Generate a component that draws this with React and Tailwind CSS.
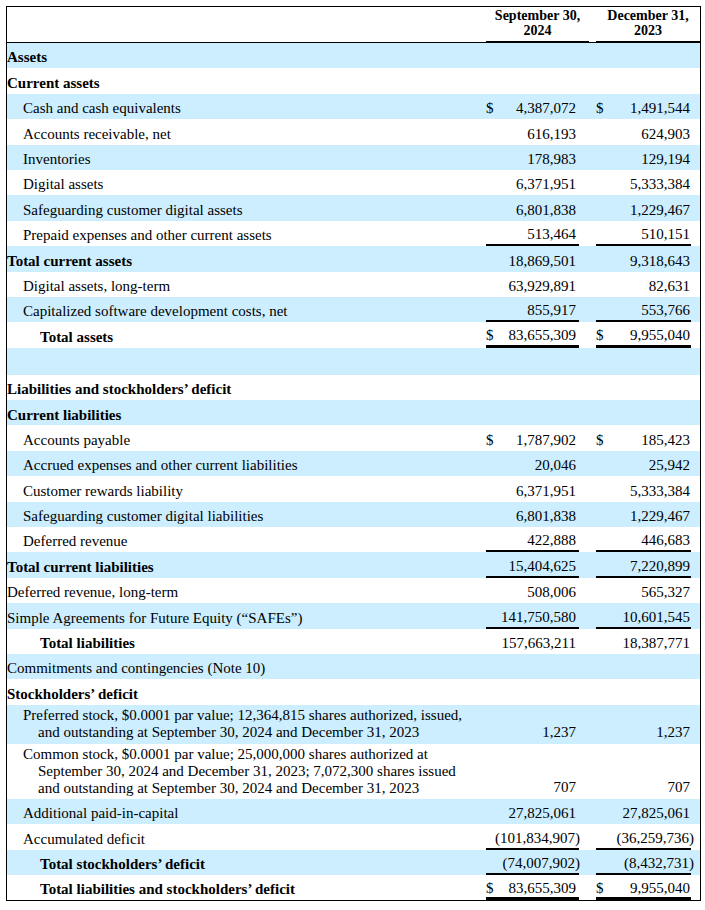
import React from 'react';

const rows = [
  { label: 'Assets', bold: true },
  { label: 'Current assets', bold: true },
  { label: 'Cash and cash equivalents', lvl: 1, a: '4,387,072', b: '1,491,544', dollar: true },
  { label: 'Accounts receivable, net', lvl: 1, a: '616,193', b: '624,903' },
  { label: 'Inventories', lvl: 1, a: '178,983', b: '129,194' },
  { label: 'Digital assets', lvl: 1, a: '6,371,951', b: '5,333,384' },
  { label: 'Safeguarding customer digital assets', lvl: 1, a: '6,801,838', b: '1,229,467' },
  { label: 'Prepaid expenses and other current assets', lvl: 1, a: '513,464', b: '510,151', ul: 'single' },
  { label: 'Total current assets', bold: true, a: '18,869,501', b: '9,318,643' },
  { label: 'Digital assets, long-term', lvl: 1, a: '63,929,891', b: '82,631' },
  { label: 'Capitalized software development costs, net', lvl: 1, a: '855,917', b: '553,766', ul: 'single' },
  { label: 'Total assets', lvl: 2, bold: true, a: '83,655,309', b: '9,955,040', dollar: true, ul: 'double' },
  { label: '', h: 'h-[27px]' },
  { label: 'Liabilities and stockholders’ deficit', bold: true },
  { label: 'Current liabilities', bold: true },
  { label: 'Accounts payable', lvl: 1, a: '1,787,902', b: '185,423', dollar: true },
  { label: 'Accrued expenses and other current liabilities', lvl: 1, a: '20,046', b: '25,942' },
  { label: 'Customer rewards liability', lvl: 1, a: '6,371,951', b: '5,333,384' },
  { label: 'Safeguarding customer digital liabilities', lvl: 1, a: '6,801,838', b: '1,229,467' },
  { label: 'Deferred revenue', lvl: 1, a: '422,888', b: '446,683', ul: 'single' },
  { label: 'Total current liabilities', bold: true, a: '15,404,625', b: '7,220,899', ul: 'single' },
  { label: 'Deferred revenue, long-term', a: '508,006', b: '565,327' },
  { label: 'Simple Agreements for Future Equity (“SAFEs”)', a: '141,750,580', b: '10,601,545', ul: 'single' },
  { label: 'Total liabilities', lvl: 2, bold: true, a: '157,663,211', b: '18,387,771' },
  { label: 'Commitments and contingencies (Note 10)' },
  { label: 'Stockholders’ deficit', bold: true },
  {
    lines: [
      'Preferred stock, $0.0001 par value; 12,364,815 shares authorized, issued,',
      'and outstanding at September 30, 2024 and December 31, 2023',
    ],
    lvl: 1, a: '1,237', b: '1,237', h: 'h-[39px]',
  },
  {
    lines: [
      'Common stock, $0.0001 par value; 25,000,000 shares authorized at',
      'September 30, 2024 and December 31, 2023; 7,072,300 shares issued',
      'and outstanding at September 30, 2024 and December 31, 2023',
    ],
    lvl: 1, a: '707', b: '707', h: 'h-[55px]',
  },
  { label: 'Additional paid-in-capital', lvl: 1, a: '27,825,061', b: '27,825,061' },
  { label: 'Accumulated deficit', lvl: 1, a: '(101,834,907)', b: '(36,259,736)', ul: 'single' },
  { label: 'Total stockholders’ deficit', lvl: 2, bold: true, a: '(74,007,902)', b: '(8,432,731)', ul: 'single' },
  { label: 'Total liabilities and stockholders’ deficit', lvl: 2, bold: true, a: '83,655,309', b: '9,955,040', dollar: true, ul: 'double' },
];

const indent = ['pl-0', 'pl-[16px]', 'pl-[33px]'];

function Amount({ value }) {
  if (!value) return null;
  if (value.endsWith(')')) {
    return (
      <span>
        {value.slice(0, -1)}
        <span className="-mr-[4px]">)</span>
      </span>
    );
  }
  return <span>{value}</span>;
}

function ValueCell({ value, dollar, ul, width, pr, multi }) {
  const line = ul === 'double' ? 'border-b-[3px] border-black' : ul === 'single' ? 'border-b-2 border-black' : '';
  return (
    <div className={`${width} ${pr} h-full flex justify-between ${multi ? 'items-end' : 'items-center pt-[4px]'} ${line}`}>
      <span>{dollar ? '$' : ''}</span>
      <Amount value={value} />
    </div>
  );
}

function Row({ row, shaded }) {
  const multi = !!row.lines;
  return (
    <div className={`flex ${row.h || 'h-[25.4px]'} ${shaded ? 'bg-[#cceeff]' : 'bg-white'}`}>
      <div className={`flex-1 min-w-0 flex ${multi ? 'flex-col justify-center' : 'items-center pt-[4px]'} ${indent[row.lvl || 0]} ${row.bold ? 'font-bold' : ''}`}>
        {multi
          ? row.lines.map((t, i) => (
              <div key={i} className={`leading-[17px] ${i > 0 ? 'pl-[15px]' : ''}`}>{t}</div>
            ))
          : <span>{row.label}</span>}
      </div>
      <ValueCell value={row.a} dollar={row.dollar} ul={row.ul} width="w-[93px]" pr="pr-[3px]" multi={multi} />
      <div className="w-[17px]" />
      <ValueCell value={row.b} dollar={row.dollar} ul={row.ul} width="w-[95px]" pr="pr-[1px]" multi={multi} />
      <div className="w-[9px]" />
    </div>
  );
}

export default function App() {
  return (
    <div className="bg-white min-h-screen pt-[6px] pl-[6px] text-black" style={{ fontFamily: '"Liberation Serif", "Times New Roman", serif' }}>
      <div className="w-[695px] border border-black text-[15px]">
        <div className="flex h-[36px] font-bold text-[14px] leading-[15px]">
          <div className="flex-1 border-b border-black" />
          <div className="w-[103px] border-b-2 border-black text-center pt-[1px]">
            September 30,<br />2024
          </div>
          <div className="w-[7px] border-b border-black" />
          <div className="w-[104px] border-b-2 border-black text-center pt-[1px]">
            December 31,<br />2023
          </div>
        </div>
        {rows.map((row, i) => (
          <Row key={i} row={row} shaded={i % 2 === 0} />
        ))}
      </div>
    </div>
  );
}
